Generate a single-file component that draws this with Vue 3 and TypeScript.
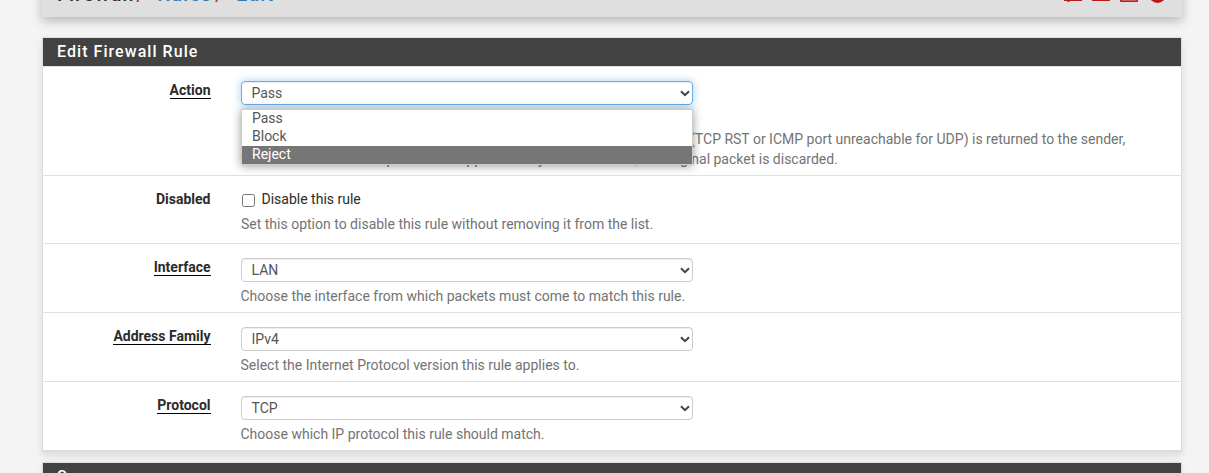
<script setup lang="ts">
import { ref } from 'vue'

interface Field {
  label: string
  value: string
  help: string
}

const actions: string[] = ['Pass', 'Block', 'Reject']
const highlighted = ref<string>('Reject')
const action = ref<string>('Pass')
const disabled = ref<boolean>(false)

const fields: Field[] = [
  { label: 'Interface', value: 'LAN', help: 'Choose the interface from which packets must come to match this rule.' },
  { label: 'Address Family', value: 'IPv4', help: 'Select the Internet Protocol version this rule applies to.' },
  { label: 'Protocol', value: 'TCP', help: 'Choose which IP protocol this rule should match.' },
]
</script>

<template>
  <div class="page">
    <header class="crumbs">
      <div class="trail">
        <span class="root">Firewall</span><span class="slash">/</span>
        <a class="rules">Rules</a><span class="slash">/</span>
        <a class="edit">Edit</a>
      </div>
      <div class="tools">
        <svg width="18" height="17" viewBox="0 0 18 17"><path d="M0 12h18v3H6l-1 1H4l-1-1H0z" /></svg>
        <svg width="18" height="17" viewBox="0 0 18 17"><path d="M0 12h18v3H0z" /></svg>
        <svg width="18" height="17" viewBox="0 0 18 17"><path d="M0 0h18v15q0 1-1 1H1q-1 0-1-1z" /><path class="pale" d="M1.500 8h15v7h-15z" /></svg>
        <svg class="round" width="17" height="17" viewBox="0 0 17 17"><circle cx="8.500" cy="8.500" r="8.500" /></svg>
      </div>
    </header>

    <section class="panel">
      <h2>Edit Firewall Rule</h2>
      <div class="row">
        <label class="name"><span class="req">Action</span></label>
        <div class="body">
          <div class="select focus">
            <span>{{ action }}</span>
            <svg class="arrow" width="10" height="7" viewBox="0 0 10 7"><path d="M1 1.200L5 5.200L9 1.200" /></svg>
            <ul class="menu">
              <li v-for="a in actions" :key="a" :class="{ on: a === highlighted }" @mouseenter="highlighted = a">{{ a }}</li>
            </ul>
          </div>
          <p class="help">
            Choose what to do with packets that match the criteria specified below.<br />
            Hint: the difference between block and reject is that with reject, a packet (TCP RST or ICMP port unreachable for UDP) is returned to the sender,<br />
            whereas with block the packet is dropped silently. In either case, the original packet is discarded.
          </p>
        </div>
      </div>

      <div class="row check-row">
        <label class="name"><span>Disabled</span></label>
        <div class="body">
          <label class="check"><input v-model="disabled" type="checkbox" />Disable this rule</label>
          <p class="help">Set this option to disable this rule without removing it from the list.</p>
        </div>
      </div>

      <div v-for="f in fields" :key="f.label" class="row">
        <label class="name"><span class="req">{{ f.label }}</span></label>
        <div class="body">
          <div class="select">
            <span>{{ f.value }}</span>
            <svg class="arrow" width="10" height="7" viewBox="0 0 10 7"><path d="M1 1.200L5 5.200L9 1.200" /></svg>
          </div>
          <p class="help">{{ f.help }}</p>
        </div>
      </div>
    </section>

    <section class="panel next">
      <h2>Source</h2>
    </section>
  </div>
</template>

<style>
body { background: #f4f4f4; overflow: hidden; }
</style>

<style scoped>
* { box-sizing: border-box; }
.page {
  height: 473px;
  overflow: hidden;
  padding: 0 27px 0 42px;
  font: 14px/20px Roboto, sans-serif;
  color: #2b2b2b;
}
.crumbs {
  height: 57px;
  margin-top: -40px;
  padding: 26px 16px 0 15px;
  display: flex;
  justify-content: space-between;
  background: #dfdfdf;
  box-shadow: 0 4px 10px rgba(0, 0, 0, 0.25);
}
.trail {
  display: flex;
  margin-top: -2px;
  font-size: 20px;
  line-height: 20px;
  letter-spacing: 1px;
  font-weight: 500;
}
.rules { margin-left: 12px; }
.edit { margin-left: 12px; }
.trail a { color: #337ab7; }
.slash { margin-left: 2px; color: #c9302c; }
.rules + .slash { margin-left: 3px; }
.tools { display: flex; gap: 10px; }
.tools svg { fill: #b71c1c; }
.tools .round { margin-left: 1px; }
.tools .pale { fill: #c4625f; }
.panel {
  margin-top: 20px;
  background: #fff;
  border: 1px solid #dcdcdc;
  border-bottom-width: 2px;
  box-shadow: 0 4px 8px rgba(0, 0, 0, 0.1);
}
.next { margin-top: 10px; }
h2 {
  margin: 0;
  height: 28px;
  padding-left: 14px;
  background: #424242;
  color: #fff;
  font-size: 16px;
  font-weight: 500;
  line-height: 28px;
  letter-spacing: 1.050px;
}
.row {
  display: flex;
  padding: 14px 0 6px;
  border-top: 1px solid #e0e0e0;
}
.name {
  width: 167.500px;
  margin: -1px 30.500px 0 0;
  text-align: right;
  font-weight: 700;
}
.name span { display: inline-block; line-height: 15px; margin-top: 3px; }
.req { border-bottom: 1px solid #000; }
.body { flex: 1; }
.select {
  position: relative;
  width: 452px;
  height: 24px;
  padding: 0 2px 0 9.500px;
  display: flex;
  align-items: center;
  justify-content: space-between;
  border: 1px solid #ccc;
  border-radius: 4px;
  box-shadow: inset 0 1px 1px rgba(0, 0, 0, 0.075);
  color: #555;
}
.focus {
  border-color: #66afe9;
  box-shadow: inset 0 1px 1px rgba(0, 0, 0, 0.075), 0 0 8px rgba(102, 175, 233, 0.6);
}
.arrow path { fill: none; stroke: #444; stroke-width: 2; }
.menu {
  position: absolute;
  z-index: 1;
  top: 27px;
  left: -1px;
  width: 452px;
  margin: 0;
  padding: 0;
  list-style: none;
  background: #fff;
  border: 1px solid #ccc;
  box-shadow: 0 1px 9px rgba(0, 0, 0, 0.4);
}
.menu li { height: 18px; padding-left: 10px; line-height: 16px; }
.menu .on { background: #767676; color: #fff; }
.help { margin: 4px 0 0 -0.500px; color: #737373; white-space: nowrap; }
.check-row { padding: 13px 0 9px; }
.check-row .name { margin-top: 0; }
.check { display: flex; height: 20px; align-items: center; }
.check input { width: 13px; height: 13px; margin: 3px 6.500px 0 1px; }
.check-row .help { margin: 5px 0 0; }
</style>
